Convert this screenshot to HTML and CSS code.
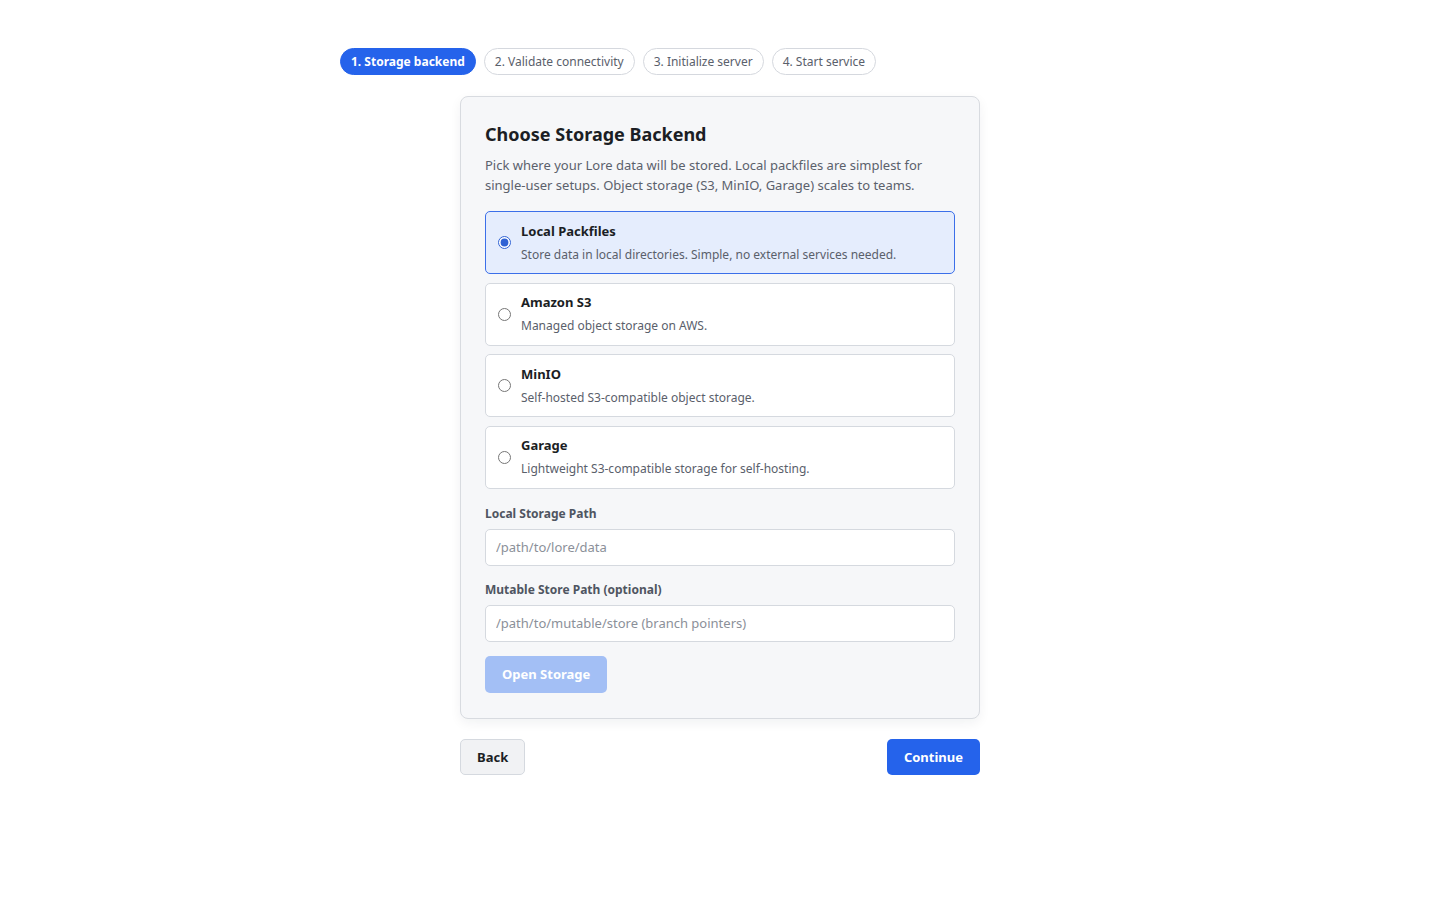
FILE: index.html
```html
<!DOCTYPE html>
<html lang="en">
<head>
<meta charset="utf-8">
<title>Lore Setup</title>
<link rel="stylesheet" href="styles.css">
</head>
<body>
<div class="wizard">
  <nav class="steps">
    <span class="step active">1. Storage backend</span>
    <span class="step">2. Validate connectivity</span>
    <span class="step">3. Initialize server</span>
    <span class="step">4. Start service</span>
  </nav>

  <main class="panel">
    <section class="card">
      <h1 class="card-title">Choose Storage Backend</h1>
      <p class="card-desc">Pick where your Lore data will be stored. Local packfiles are simplest for single-user setups. Object storage (S3, MinIO, Garage) scales to teams.</p>

      <div class="options">
        <label class="option selected">
          <input type="radio" name="backend" value="local" checked>
          <span class="option-text">
            <span class="option-title">Local Packfiles</span>
            <span class="option-sub">Store data in local directories. Simple, no external services needed.</span>
          </span>
        </label>
        <label class="option">
          <input type="radio" name="backend" value="s3">
          <span class="option-text">
            <span class="option-title">Amazon S3</span>
            <span class="option-sub">Managed object storage on AWS.</span>
          </span>
        </label>
        <label class="option">
          <input type="radio" name="backend" value="minio">
          <span class="option-text">
            <span class="option-title">MinIO</span>
            <span class="option-sub">Self-hosted S3-compatible object storage.</span>
          </span>
        </label>
        <label class="option">
          <input type="radio" name="backend" value="garage">
          <span class="option-text">
            <span class="option-title">Garage</span>
            <span class="option-sub">Lightweight S3-compatible storage for self-hosting.</span>
          </span>
        </label>
      </div>

      <div class="field">
        <label class="field-label" for="local-path">Local Storage Path</label>
        <input class="field-input" id="local-path" type="text" placeholder="/path/to/lore/data">
      </div>
      <div class="field">
        <label class="field-label" for="mutable-path">Mutable Store Path (optional)</label>
        <input class="field-input" id="mutable-path" type="text" placeholder="/path/to/mutable/store (branch pointers)">
      </div>

      <button class="btn btn-open" type="button" disabled>Open Storage</button>
    </section>

    <div class="actions">
      <button class="btn btn-back" type="button">Back</button>
      <button class="btn btn-primary" type="button">Continue</button>
    </div>
  </main>
</div>
</body>
</html>
```

FILE: styles.css
```css
* {
  box-sizing: border-box;
}

html, body {
  margin: 0;
  padding: 0;
  background: #ffffff;
}

body {
  font-family: "Noto Sans", "Open Sans", sans-serif;
  color: #1b1e24;
}

.wizard {
  width: 760px;
  margin: 0 auto;
  padding-top: 48px;
}

/* step pills */
.steps {
  display: flex;
  gap: 8px;
}

.step {
  display: inline-flex;
  align-items: center;
  height: 27px;
  padding: 0 10px;
  border: 1px solid #d5d8de;
  border-radius: 999px;
  font-size: 12px;
  color: #5a606b;
  background: #ffffff;
}

.step.active {
  background: #2563eb;
  border-color: #2563eb;
  color: #ffffff;
  font-weight: 700;
}

/* main column */
.panel {
  width: 520px;
  margin: 21px auto 0;
}

.card {
  background: #f6f7f9;
  border: 1px solid #d8dbe0;
  border-radius: 8px;
  padding: 24px 24px 25px;
  box-shadow: 0 4px 12px rgba(20, 30, 50, 0.06);
}

.card-title {
  margin: 0;
  font-size: 18px;
  line-height: 26px;
  font-weight: 700;
  color: #1b1e24;
}

.card-desc {
  margin: 8px 0 0;
  font-size: 13px;
  line-height: 20px;
  color: #5b616c;
}

.options {
  display: flex;
  flex-direction: column;
  gap: 8.5px;
  margin-top: 16px;
}

.option {
  display: flex;
  align-items: center;
  gap: 10px;
  height: 63px;
  padding: 0 12px;
  background: #ffffff;
  border: 1px solid #d5d9df;
  border-radius: 5px;
  cursor: pointer;
}

.option.selected {
  background: #e5edfd;
  border-color: #3b6fe9;
}

.option input {
  margin: 0;
  width: 13px;
  height: 13px;
  accent-color: #2f62d4;
  flex: none;
}

.option-text {
  display: flex;
  flex-direction: column;
  gap: 6px;
}

.option-title {
  font-size: 13px;
  line-height: 18px;
  font-weight: 700;
  color: #1b1e24;
}

.option-sub {
  font-size: 12px;
  line-height: 18px;
  color: #5a606b;
}

.field {
  display: flex;
  flex-direction: column;
  gap: 6px;
  margin-top: 16px;
}

.field + .field {
  margin-top: 15px;
}

.field-label {
  font-size: 12px;
  line-height: 18px;
  font-weight: 700;
  color: #4f5561;
}

.field-input {
  height: 37px;
  padding: 0 10px;
  border: 1px solid #d5d9df;
  border-radius: 5px;
  background: #ffffff;
  font-family: inherit;
  font-size: 13px;
  color: #1b1e24;
  outline: none;
}

.field-input::placeholder {
  color: #8b9099;
}

.btn {
  font-family: inherit;
  font-size: 13px;
  font-weight: 700;
  height: 37px;
  padding: 0 16px;
  border-radius: 5px;
  border: 1px solid transparent;
  cursor: pointer;
}

.btn-open {
  margin-top: 14px;
  background: #a3bff5;
  color: #ffffff;
  cursor: default;
}

.actions {
  display: flex;
  justify-content: space-between;
  margin-top: 20px;
}

.actions .btn {
  height: 36px;
}

.btn-back {
  background: #f1f2f4;
  border-color: #d5d9df;
  color: #1b1e24;
}

.btn-primary {
  background: #2563eb;
  color: #ffffff;
}
```
